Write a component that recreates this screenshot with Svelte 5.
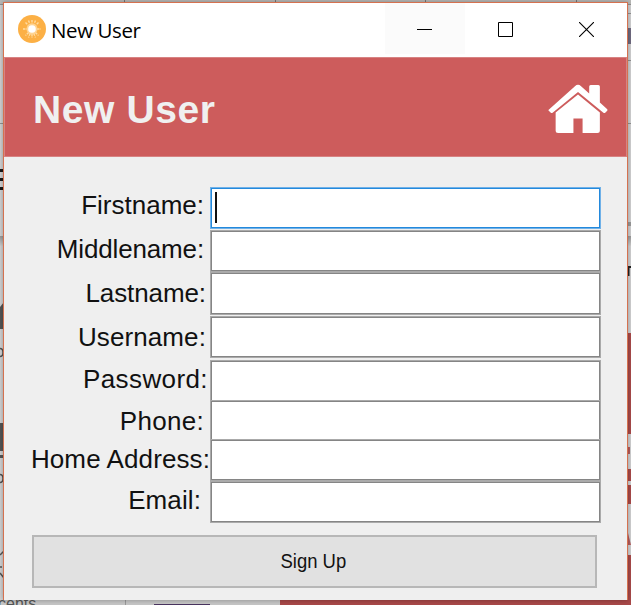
<script>
  const fields = [
    { label: 'Firstname:', height: 42, gap: 0, pad: 3, inset: 6, track: 0, active: true },
    { label: 'Middlename:', height: 42, gap: 1, pad: 4, inset: 6, track: -0.15 },
    { label: 'Lastname:', height: 43, gap: 0, pad: 6, inset: 4, track: -0.1 },
    { label: 'Username:', height: 42, gap: 1, pad: 6, inset: 4, track: 0.1 },
    { label: 'Password:', height: 42, gap: 2, pad: 4, inset: 2, track: 0.4 },
    { label: 'Phone:', height: 41, gap: -2, pad: 6, inset: 6, track: 0.3 },
    { label: 'Home Address:', height: 42, gap: -2, pad: 5, inset: 0, track: 0.1 },
    { label: 'Email:', height: 42, gap: 0, pad: 4, inset: 9, track: 0.1 }
  ];
</script>

<div class="desktop">
  <svg class="backdrop" width="631" height="605" viewBox="0 0 631 605" aria-hidden="true">
    <defs>
      <linearGradient id="fade" x1="0" y1="0" x2="0" y2="1">
        <stop offset="0" stop-color="#999" />
        <stop offset="1" stop-color="#d0d0d0" />
      </linearGradient>
    </defs>
    <rect width="631" height="605" fill="#d2d2d3" />
    <rect width="631" height="4" fill="#b9b9b7" />
    <path d="M0 4.5H631M0 123.5H4M627 13.5H631M627 60.5H631M627 123.5H631" stroke="#929292" />
    <path d="M124.5 0V2M275.5 0V2M425.5 0V2M576.5 0V2" stroke="#777" />
    <path d="M0 169h4v3h-4zM0 178h4v3h-4zM0 187h4v3h-4z" fill="#181818" />
    <rect y="236" width="4" height="10" fill="url(#fade)" />
    <path d="M0 307l4-5v27H0zM0 423h4v28H0zM0 455h4v3H0z" fill="#555" />
    <path d="M0 348.500q3 0 3 4t-3 4M0 474.500q3 0 3 4t-3 4M0 555l4-4M0 567h2M0 573l4 5" fill="none" stroke="#555" stroke-width="1.500" />
    <rect x="628" y="28" width="3" height="16" fill="#706b81" />
    <rect x="628" y="222" width="3" height="4" fill="#999" />
    <rect x="628" y="236" width="3" height="10" fill="url(#fade)" />
    <path d="M628.500 276v-10M628 267h3" stroke="#222" stroke-width="2" />
    <path d="M628 333h3v101h-3zM628 469h3v12h-3zM628 485h3v19h-3zM628 555h3v50h-3z" fill="#aa4a4a" />
    <path d="M628 447h2v7h-2zM628 533l3 12h-3z" fill="#b65c5d" />
    <rect y="600" width="631" height="5" fill="#c6c6c6" />
    <rect x="125" y="600" width="1" height="5" fill="#999" />
    <rect x="154" y="604" width="56" height="1" fill="#49345f" />
    <rect x="280" y="600" width="351" height="5" fill="#a84848" />
    <text x="-2" y="609" class="under">cents</text>
  </svg>

  <main class="window">
    <div class="titlebar">
      <svg class="appicon" width="28" height="28" viewBox="0 0 28 28">
        <circle cx="14" cy="14" r="14" fill="#fcb045" />
        <g stroke="#ffdca3" stroke-width="1.400" stroke-dasharray="2.500 1">
          <path d="M14 5V23M5 14H23M7.500 7.500L20.500 20.500M20.500 7.500L7.500 20.500M10.500 5.500L17.500 22.500M17.500 5.500L10.500 22.500" />
        </g>
        <circle cx="14" cy="14" r="5.500" fill="#ffd493" />
        <circle cx="14" cy="14" r="3.800" fill="#fff" />
      </svg>
      <span class="caption">New User</span>
      <div class="control hover">
        <svg width="15" height="15"><path d="M0 7.500H15" stroke="#000" /></svg>
      </div>
      <div class="control">
        <svg width="15" height="15"><path d="M.5 .5H14.500V14.500H.5Z" fill="none" stroke="#000" /></svg>
      </div>
      <div class="control">
        <svg width="15" height="15"><path d="M0 0L15 15M15 0L0 15" stroke="#000" stroke-width="1.100" /></svg>
      </div>
    </div>

    <header>
      <h1>New User</h1>
      <svg class="home" width="61" height="50" viewBox="0 0 60 50" preserveAspectRatio="none">
        <path d="M30.500 10.500L52 28.500V46.500Q52 49 49.500 49H35V34.500H26V49H11Q8.500 49 8.500 46.500V28.500Z" fill="#fff" />
        <path d="M2.500 25L27.500 2.200Q30.500 -.5 33.500 2.200L41.500 9.500V2.500Q41.500 1 43 1H50.500Q52 1 52 2.500V18.500L59 25Q60 26 59 27L57.500 28.500Q56.500 29.500 55.500 28.700L30.500 8L5.500 28.700Q4.500 29.500 3.500 28.500L1.500 26.500Q1 26 2.500 25Z" fill="#fff" />
      </svg>
    </header>

    <form onsubmit={(e) => e.preventDefault()}>
      {#each fields as f}
        <label style="height:{f.height}px;margin-top:{f.gap}px">
          <span
            class="name"
            style="padding-top:{f.pad}px;padding-right:{f.inset}px;letter-spacing:{f.track}px">{f.label}</span>
          <span class="field" class:active={f.active}>
            {#if f.active}<i class="caret"></i>{/if}
          </span>
        </label>
      {/each}
      <button type="submit"><span>Sign Up</span></button>
    </form>
  </main>
</div>

<style>
  .desktop {
    position: relative;
    box-sizing: border-box;
    width: 631px;
    height: 605px;
    padding: 2px 3px 5px;
    overflow: hidden;
    font-family: 'Liberation Sans', Arial, sans-serif;
  }
  .backdrop {
    position: absolute;
    inset: 0;
  }
  .under {
    font-size: 16px;
    fill: #555;
  }
  .window {
    position: relative;
    box-sizing: border-box;
    width: 625px;
    height: 598px;
    border: 1px solid #d5714f;
    border-bottom: 0;
    background: #efefef;
    box-shadow: 0 0 5px rgba(0, 0, 0, 0.3);
  }
  .titlebar {
    display: flex;
    align-items: flex-start;
    box-sizing: border-box;
    height: 54px;
    padding: 0 1px 0 14px;
    background: #fff;
  }
  .appicon {
    margin-top: 12px;
  }
  .caption {
    flex: 1;
    padding: 12px 0 0 5px;
    font: 20.5px/30px 'Open Sans', 'Noto Sans', sans-serif;
    letter-spacing: -0.4px;
    color: #000;
  }
  .control {
    display: flex;
    justify-content: center;
    box-sizing: border-box;
    width: 81px;
    height: 51px;
    padding-top: 19px;
  }
  .control:last-child {
    width: 80px;
  }
  .hover {
    width: 80px;
    padding-right: 2px;
    background: #fbfbfb;
  }
  header {
    display: flex;
    justify-content: space-between;
    box-sizing: border-box;
    height: 100px;
    padding: 0 18px 0 28px;
    border: 1px solid #d78383;
    background: #cd5c5c;
  }
  h1 {
    margin: 0;
    padding-top: 29px;
    font: bold 39px/46px 'Liberation Sans', Arial, sans-serif;
    letter-spacing: 0.6px;
    color: #f0f0f0;
  }
  .home {
    margin-top: 26px;
  }
  form {
    display: flex;
    flex-direction: column;
    padding-top: 30px;
  }
  label {
    display: flex;
    flex: none;
  }
  .name {
    box-sizing: border-box;
    display: flex;
    justify-content: flex-end;
    width: 206px;
    font-size: 26px;
    line-height: 30px;
    white-space: nowrap;
    color: #111;
  }
  .field {
    box-sizing: border-box;
    width: 391px;
    border: 1px solid #aaa;
    background: #fff;
    box-shadow: inset 0 0 0 1px #858585;
  }
  .active {
    border-color: #70b1e8;
    box-shadow: inset 0 0 0 1px #2389dc;
  }
  .caret {
    display: block;
    width: 2px;
    height: 31px;
    margin: 4px 0 0 4px;
    background: #111;
  }
  button {
    box-sizing: border-box;
    width: 565px;
    height: 53px;
    margin: 12px 0 0 28px;
    padding: 0 3px 2px 0;
    border: 2px solid #b7b7b7;
    background: #e1e1e1;
    font: 21px/24px 'Liberation Sans', Arial, sans-serif;
    color: #111;
  }
  button span {
    display: inline-block;
    transform: scaleX(0.88);
  }
</style>
